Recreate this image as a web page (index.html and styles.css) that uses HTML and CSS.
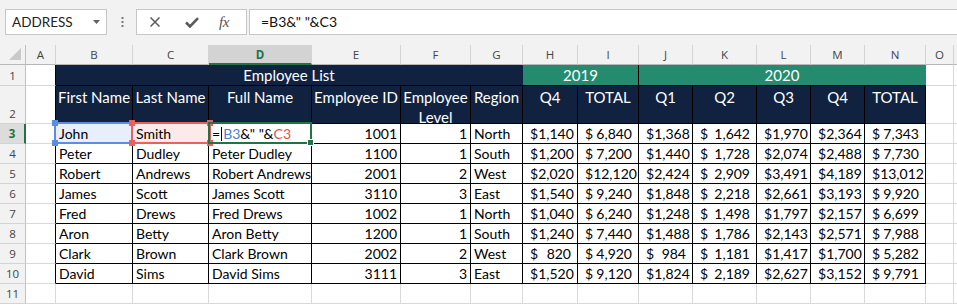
FILE: index.html
```html
<!DOCTYPE html>
<html>
<head>
<meta charset="utf-8">
<title>Employee List</title>
<link rel="stylesheet" href="styles.css">
</head>
<body>
<div class="app">
  <div class="toolbar">
    <div class="namebox">
      <span class="nbtext">ADDRESS</span>
      <svg class="caret" width="7" height="4" viewBox="0 0 7 4"><path d="M0 0H7L3.5 4Z" fill="#616161"/></svg>
    </div>
    <svg class="dots" width="3" height="10" viewBox="0 0 3 10"><rect x="0.5" y="0" width="2" height="2" fill="#7a7a7a"/><rect x="0.5" y="4" width="2" height="2" fill="#7a7a7a"/><rect x="0.5" y="8" width="2" height="2" fill="#7a7a7a"/></svg>
    <div class="fxbtns">
      <svg class="ic-x" width="10" height="10" viewBox="0 0 10 10"><path d="M0.5 0.5L9.5 9.5M9.5 0.5L0.5 9.5" stroke="#5a5a5a" stroke-width="1.5" fill="none"/></svg>
      <svg class="ic-ok" width="14" height="11" viewBox="0 0 14 11"><path d="M1 5.5L5 9.5L13 1.2" stroke="#5a5a5a" stroke-width="2.6" fill="none"/></svg>
      <span class="fx">fx</span>
    </div>
    <div class="formula">=B3&amp;" "&amp;C3</div>
  </div>

  <div class="sheet">
    <!-- column headers -->
    <div class="corner"><svg width="12" height="12" viewBox="0 0 12 12"><path d="M12 0V12H0Z" fill="#c9c9c9"/></svg></div>
    <div class="ch">A</div><div class="ch">B</div><div class="ch">C</div><div class="ch sel">D</div><div class="ch">E</div><div class="ch">F</div><div class="ch">G</div><div class="ch">H</div><div class="ch">I</div><div class="ch">J</div><div class="ch">K</div><div class="ch">L</div><div class="ch">M</div><div class="ch">N</div><div class="ch">O</div><div class="ch"></div>

    <!-- row 1 -->
    <div class="rh">1</div>
    <div class="c ka"></div>
    <div class="hd title span6">Employee List</div>
    <div class="gr title span2 kright">2019</div>
    <div class="gr title span5 gright">2020</div>
    <div class="c"></div><div class="c"></div>

    <!-- row 2 -->
    <div class="rh">2</div>
    <div class="c ka"></div>
    <div class="hd th">First Name</div>
    <div class="hd th">Last Name</div>
    <div class="hd th">Full Name</div>
    <div class="hd th">Employee ID</div>
    <div class="hd th wrap">Employee Level</div>
    <div class="hd th">Region</div>
    <div class="hd th">Q4</div>
    <div class="hd th">TOTAL</div>
    <div class="hd th">Q1</div>
    <div class="hd th">Q2</div>
    <div class="hd th">Q3</div>
    <div class="hd th">Q4</div>
    <div class="hd th">TOTAL</div>
    <div class="c"></div><div class="c"></div>

    <!-- row 3 -->
    <div class="rh rsel">3</div>
    <div class="c ka"></div>
    <div class="k t refb">John<span class="ref blue"><i class="sq tl"></i><i class="sq tr"></i><i class="sq bl"></i><i class="sq br"></i></span></div>
    <div class="k t refr">Smith<span class="ref red"><i class="sq tl"></i><i class="sq tr"></i><i class="sq bl"></i><i class="sq br"></i></span></div>
    <div class="k t act">=<span class="cur"></span><span class="fb">B3</span>&amp;" "&amp;<span class="fr">C3</span><span class="actbox"><i class="handle"></i></span></div>
    <div class="k n">1001</div><div class="k n">1</div><div class="k t">North</div>
    <div class="k a"><span>$</span><span>1,140</span></div><div class="k a"><span>$</span><span>6,840</span></div>
    <div class="k a"><span>$</span><span>1,368</span></div><div class="k a"><span>$</span><span>1,642</span></div>
    <div class="k a"><span>$</span><span>1,970</span></div><div class="k a"><span>$</span><span>2,364</span></div>
    <div class="k a"><span>$</span><span>7,343</span></div>
    <div class="c"></div><div class="c"></div>

    <!-- row 4 -->
    <div class="rh">4</div>
    <div class="c ka"></div>
    <div class="k t">Peter</div><div class="k t">Dudley</div><div class="k t">Peter Dudley</div>
    <div class="k n">1100</div><div class="k n">1</div><div class="k t">South</div>
    <div class="k a"><span>$</span><span>1,200</span></div><div class="k a"><span>$</span><span>7,200</span></div>
    <div class="k a"><span>$</span><span>1,440</span></div><div class="k a"><span>$</span><span>1,728</span></div>
    <div class="k a"><span>$</span><span>2,074</span></div><div class="k a"><span>$</span><span>2,488</span></div>
    <div class="k a"><span>$</span><span>7,730</span></div>
    <div class="c"></div><div class="c"></div>

    <!-- row 5 -->
    <div class="rh">5</div>
    <div class="c ka"></div>
    <div class="k t">Robert</div><div class="k t">Andrews</div><div class="k t">Robert Andrews</div>
    <div class="k n">2001</div><div class="k n">2</div><div class="k t">West</div>
    <div class="k a"><span>$</span><span>2,020</span></div><div class="k a"><span>$</span><span>12,120</span></div>
    <div class="k a"><span>$</span><span>2,424</span></div><div class="k a"><span>$</span><span>2,909</span></div>
    <div class="k a"><span>$</span><span>3,491</span></div><div class="k a"><span>$</span><span>4,189</span></div>
    <div class="k a"><span>$</span><span>13,012</span></div>
    <div class="c"></div><div class="c"></div>

    <!-- row 6 -->
    <div class="rh">6</div>
    <div class="c ka"></div>
    <div class="k t">James</div><div class="k t">Scott</div><div class="k t">James Scott</div>
    <div class="k n">3110</div><div class="k n">3</div><div class="k t">East</div>
    <div class="k a"><span>$</span><span>1,540</span></div><div class="k a"><span>$</span><span>9,240</span></div>
    <div class="k a"><span>$</span><span>1,848</span></div><div class="k a"><span>$</span><span>2,218</span></div>
    <div class="k a"><span>$</span><span>2,661</span></div><div class="k a"><span>$</span><span>3,193</span></div>
    <div class="k a"><span>$</span><span>9,920</span></div>
    <div class="c"></div><div class="c"></div>

    <!-- row 7 -->
    <div class="rh">7</div>
    <div class="c ka"></div>
    <div class="k t">Fred</div><div class="k t">Drews</div><div class="k t">Fred Drews</div>
    <div class="k n">1002</div><div class="k n">1</div><div class="k t">North</div>
    <div class="k a"><span>$</span><span>1,040</span></div><div class="k a"><span>$</span><span>6,240</span></div>
    <div class="k a"><span>$</span><span>1,248</span></div><div class="k a"><span>$</span><span>1,498</span></div>
    <div class="k a"><span>$</span><span>1,797</span></div><div class="k a"><span>$</span><span>2,157</span></div>
    <div class="k a"><span>$</span><span>6,699</span></div>
    <div class="c"></div><div class="c"></div>

    <!-- row 8 -->
    <div class="rh">8</div>
    <div class="c ka"></div>
    <div class="k t">Aron</div><div class="k t">Betty</div><div class="k t">Aron Betty</div>
    <div class="k n">1200</div><div class="k n">1</div><div class="k t">South</div>
    <div class="k a"><span>$</span><span>1,240</span></div><div class="k a"><span>$</span><span>7,440</span></div>
    <div class="k a"><span>$</span><span>1,488</span></div><div class="k a"><span>$</span><span>1,786</span></div>
    <div class="k a"><span>$</span><span>2,143</span></div><div class="k a"><span>$</span><span>2,571</span></div>
    <div class="k a"><span>$</span><span>7,988</span></div>
    <div class="c"></div><div class="c"></div>

    <!-- row 9 -->
    <div class="rh">9</div>
    <div class="c ka"></div>
    <div class="k t">Clark</div><div class="k t">Brown</div><div class="k t">Clark Brown</div>
    <div class="k n">2002</div><div class="k n">2</div><div class="k t">West</div>
    <div class="k a"><span>$</span><span>820</span></div><div class="k a"><span>$</span><span>4,920</span></div>
    <div class="k a"><span>$</span><span>984</span></div><div class="k a"><span>$</span><span>1,181</span></div>
    <div class="k a"><span>$</span><span>1,417</span></div><div class="k a"><span>$</span><span>1,700</span></div>
    <div class="k a"><span>$</span><span>5,282</span></div>
    <div class="c"></div><div class="c"></div>

    <!-- row 10 -->
    <div class="rh">10</div>
    <div class="c ka"></div>
    <div class="k t">David</div><div class="k t">Sims</div><div class="k t">David Sims</div>
    <div class="k n">3111</div><div class="k n">3</div><div class="k t">East</div>
    <div class="k a"><span>$</span><span>1,520</span></div><div class="k a"><span>$</span><span>9,120</span></div>
    <div class="k a"><span>$</span><span>1,824</span></div><div class="k a"><span>$</span><span>2,189</span></div>
    <div class="k a"><span>$</span><span>2,627</span></div><div class="k a"><span>$</span><span>3,152</span></div>
    <div class="k a"><span>$</span><span>9,791</span></div>
    <div class="c"></div><div class="c"></div>

    <!-- row 11 -->
    <div class="rh">11</div>
    <div class="c"></div><div class="c"></div><div class="c"></div><div class="c"></div><div class="c"></div><div class="c"></div><div class="c"></div><div class="c"></div><div class="c"></div><div class="c"></div><div class="c"></div><div class="c"></div><div class="c"></div><div class="c"></div><div class="c"></div><div class="c"></div>
  </div>
</div>
</body>
</html>
```

FILE: styles.css
```css
html, body {
  margin: 0;
  padding: 0;
}
body {
  width: 957px;
  height: 306px;
  overflow: hidden;
  background: #ffffff;
  font-family: Lato, "Liberation Sans", sans-serif;
}
.app {
  width: 957px;
  overflow: hidden;
}

/* ---------- formula toolbar ---------- */
.toolbar {
  display: flex;
  align-items: flex-start;
  height: 45px;
  box-sizing: border-box;
  padding-top: 9px;
  padding-left: 5px;
  background: #f2f2f2;
  overflow: hidden;
}
.toolbar > * {
  flex: none;
}
.namebox {
  display: flex;
  align-items: center;
  box-sizing: border-box;
  width: 102px;
  height: 26px;
  background: #fff;
  border: 1px solid #c6c6c6;
  padding-left: 6px;
}
.nbtext {
  font-size: 13.5px;
  color: #222;
}
.caret {
  margin-left: auto;
  margin-right: 6px;
}
.dots {
  margin-left: 14px;
  margin-top: 8px;
}
.fxbtns {
  display: flex;
  align-items: center;
  box-sizing: border-box;
  margin-left: 12px;
  width: 111px;
  height: 26px;
  background: #fff;
  border: 1px solid #c6c6c6;
  padding-left: 13px;
}
.ic-ok {
  margin-left: 25px;
}
.fx {
  margin-left: 20px;
  font-family: "Liberation Serif", serif;
  font-style: italic;
  font-size: 15px;
  color: #555;
  letter-spacing: -0.5px;
}
.formula {
  box-sizing: border-box;
  margin-left: 2px;
  width: 720px;
  height: 26px;
  background: #fff;
  border: 1px solid #c6c6c6;
  border-right: none;
  padding-left: 11px;
  font-size: 14px;
  line-height: 24px;
  color: #111;
  white-space: pre;
}

/* ---------- sheet grid ---------- */
.sheet {
  display: grid;
  grid-template-columns: 26px 30px 77px 76px 103px 89px 70px 52px 55px 61px 54px 64px 54px 54px 61px 28px 64px;
  grid-template-rows: 20px 21px 38px repeat(9, 20px);
  width: 1043px;
}
.sheet > div {
  box-sizing: border-box;
  min-width: 0;
  overflow: hidden;
  white-space: nowrap;
}

.corner {
  background: #f2f2f2;
  border-right: 1px solid #c0c0c0;
  border-bottom: 1px solid #b8b8b8;
  display: flex;
  align-items: flex-end;
  justify-content: flex-end;
  padding: 0 4px 4px 0;
}
.ch {
  background: #f2f2f2;
  border-right: 1px solid #d4d4d4;
  border-bottom: 1px solid #b8b8b8;
  display: flex;
  align-items: center;
  justify-content: center;
  font-family: "Open Sans", "Noto Sans", sans-serif;
  font-size: 11.5px;
  color: #444;
}
.ch.sel {
  background: #d3d3d3;
  border-bottom: 2px solid #217346;
  color: #217346;
  font-weight: 700;
}
.rh {
  background: #f2f2f2;
  border-right: 1px solid #c0c0c0;
  border-bottom: 1px solid #d4d4d4;
  display: flex;
  align-items: flex-end;
  justify-content: center;
  font-family: "Open Sans", "Noto Sans", sans-serif;
  font-size: 11.5px;
  line-height: 19px;
  color: #444;
}
.rh.rsel {
  background: #dcdcdc;
  border-right: 2px solid #217346;
  color: #217346;
  font-weight: 700;
}

.c {
  border-right: 1px solid #d9d9d9;
  border-bottom: 1px solid #d9d9d9;
}
.c.ka {
  border-right-color: #000;
}

/* header cells */
.hd {
  background: #112240;
}
.gr {
  background: #248b6e;
}
.title {
  display: flex;
  align-items: flex-end;
  justify-content: center;
  color: #fff;
  font-size: 15px;
  line-height: 20px;
  border-bottom: 1px solid #000;
}
.span6 { grid-column: span 6; border-right: 1px solid #112240; }
.span2 { grid-column: span 2; }
.span5 { grid-column: span 5; }
.kright { border-right: 1px solid #000; }
.gright { border-right: 1px solid #248b6e; }
.th {
  color: #fff;
  font-size: 15px;
  line-height: 20px;
  text-align: center;
  padding-top: 1px;
  border-right: 1px solid #000;
  border-bottom: 1px solid #000;
}
.th.wrap {
  white-space: normal;
}

/* data cells */
.k {
  display: flex;
  align-items: center;
  border-right: 1px solid #000;
  border-bottom: 1px solid #000;
  font-size: 14px;
  line-height: 19px;
  color: #000;
}
.t {
  padding-left: 3px;
}
.n {
  justify-content: flex-end;
  padding-right: 3px;
}
.a {
  justify-content: space-between;
  padding: 0 6px 0 7px;
}

/* formula references & active cell */
.refb, .refr, .act {
  position: relative;
  overflow: visible !important;
}
.refb { background: #e8eefa; }
.refr { background: #fce9e9; }
.ref {
  position: absolute;
  top: -2px;
  height: 22px;
  box-sizing: border-box;
  border: 2px solid;
  z-index: 2;
}
.ref.blue {
  left: -2px;
  width: 79px;
  border-color: #5b8de0;
}
.ref.red {
  left: -2px;
  width: 80px;
  border-color: #e8615f;
  z-index: 3;
}
.sq {
  position: absolute;
  width: 6px;
  height: 6px;
}
.blue .sq { background: #5b8de0; }
.red .sq { background: #e8615f; }
.sq.tl { left: -4px; top: -4px; }
.sq.tr { right: -4px; top: -4px; }
.sq.bl { left: -4px; bottom: -4px; }
.sq.br { right: -4px; bottom: -4px; }

.act {
  z-index: 4;
}
.cur {
  display: inline-block;
  width: 1px;
  height: 14px;
  background: #000;
  margin: 0 1px 0 1px;
}
.fb { color: #4a80d8; }
.fr { color: #e6504e; }
.actbox {
  position: absolute;
  left: -1px;
  top: -2px;
  width: 104px;
  height: 22px;
  box-sizing: border-box;
  border: 2px solid #217346;
}
.handle {
  position: absolute;
  right: -4px;
  bottom: -4px;
  width: 5px;
  height: 5px;
  background: #217346;
  border: 1px solid #fff;
}
```
